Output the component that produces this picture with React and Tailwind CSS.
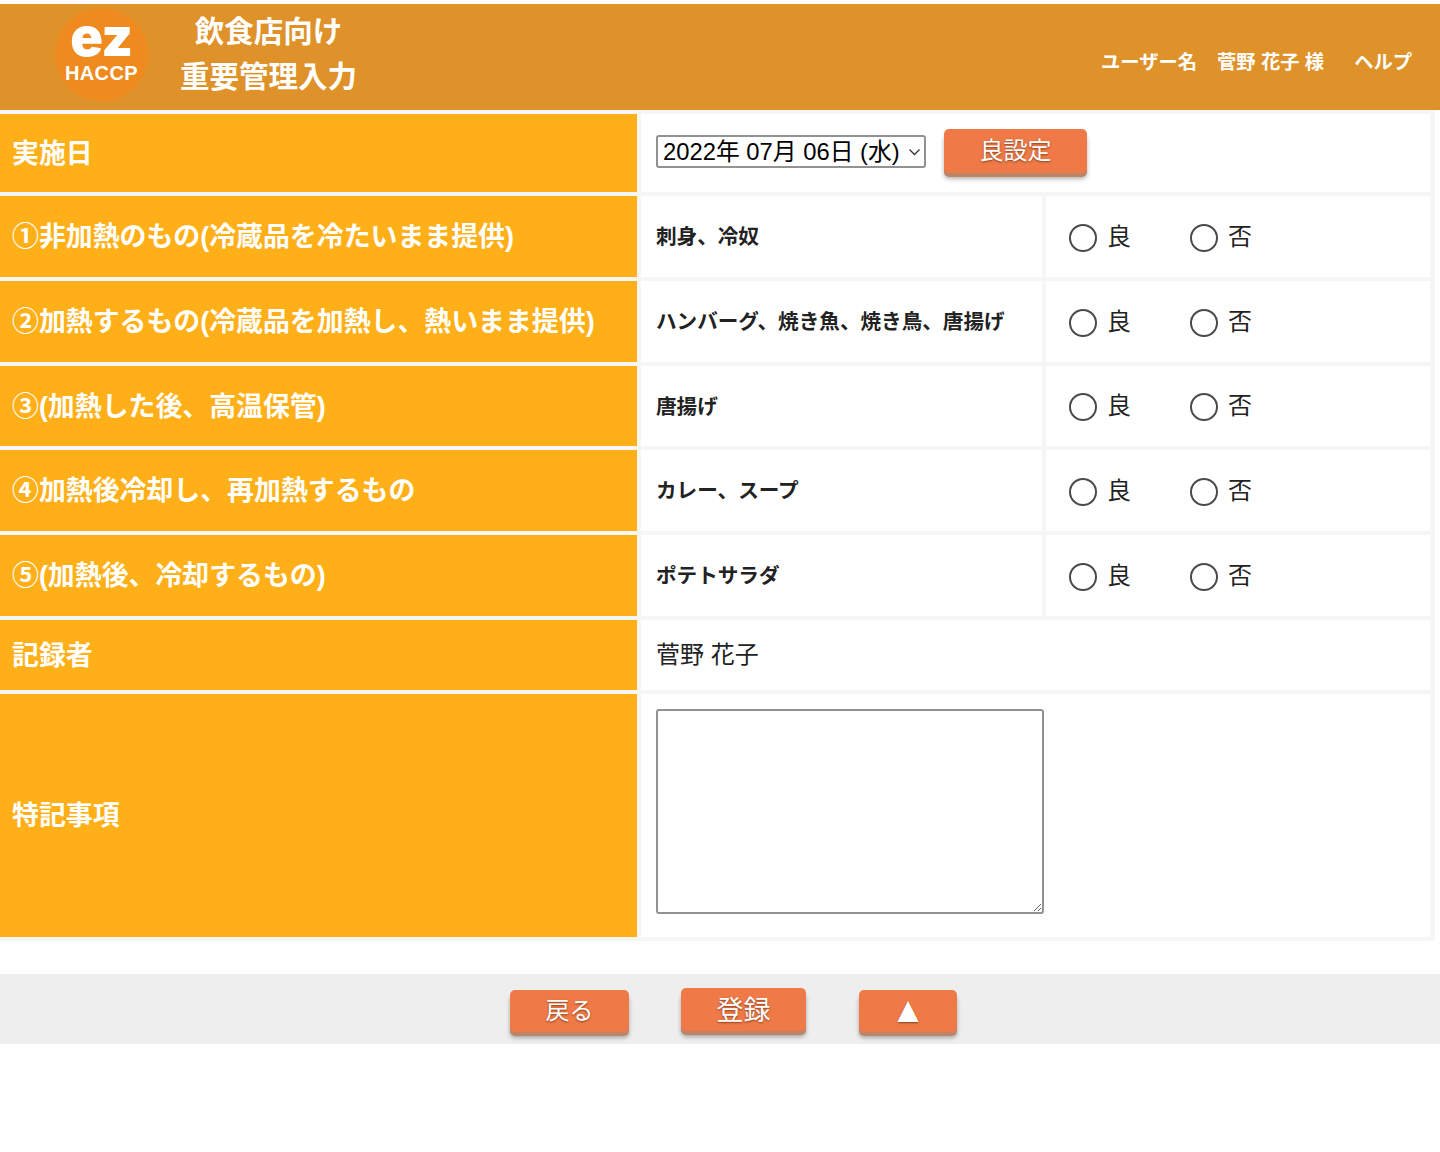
import React from 'react';

const jp = '[font-family:"Liberation_Sans","Noto_Sans_CJK_JP",sans-serif]';

const items = [
  { label: '①非加熱のもの(冷蔵品を冷たいまま提供)', food: '刺身、冷奴', h: 'h-[81px]' },
  { label: '②加熱するもの(冷蔵品を加熱し、熱いまま提供)', food: 'ハンバーグ、焼き魚、焼き鳥、唐揚げ', h: 'h-[81px]' },
  { label: '③(加熱した後、高温保管)', food: '唐揚げ', h: 'h-[80px]' },
  { label: '④加熱後冷却し、再加熱するもの', food: 'カレー、スープ', h: 'h-[81px]' },
  { label: '⑤(加熱後、冷却するもの)', food: 'ポテトサラダ', h: 'h-[81px]' },
];

function Head({ children }) {
  return (
    <div className="w-[637px] shrink-0 bg-[#ffaf17] flex items-center pl-[12px] pt-[2px] text-[26.9px] font-bold text-white whitespace-nowrap">
      {children}
    </div>
  );
}

function Radio({ name, label }) {
  return (
    <label className="flex items-center w-[121px] text-[24px] text-[#222]">
      <input type="radio" name={name} className="appearance-none w-[28px] h-[28px] rounded-full border-2 border-[#4a4a4a] bg-white mr-[10px]" />
      <span className="relative -top-[1px]">{label}</span>
    </label>
  );
}

function OrangeButton({ children, className }) {
  return (
    <button className={`bg-[#ef7a48] rounded-[5px] text-white [text-shadow:0_1px_2px_rgba(90,40,10,0.7)] shadow-[0_4px_0_#bd8468,0_6px_4px_rgba(0,0,0,0.3)] flex items-center justify-center ${className}`}>
      {children}
    </button>
  );
}

export default function App() {
  return (
    <div className={`min-h-[1152px] bg-white pt-1 ${jp}`}>
      {/* header */}
      <header className="h-[106px] bg-[#de9229] flex items-center text-white">
        <div className="ml-[55px] mb-[6px] w-[93px] h-[93px] rounded-full bg-[#ee8a1e] flex flex-col items-center pt-[7px]">
          <span className="text-[54px] leading-[44px] font-black tracking-[-0.5px] [font-family:Inter,sans-serif]">ez</span>
          <span className="text-[20px] leading-[20px] font-bold mt-[4px] tracking-[0.4px]">HACCP</span>
        </div>
        <div className="w-[177px] ml-[32px] mb-[6px] text-center text-[29.5px] leading-[45px] font-bold whitespace-nowrap">
          <div>飲食店向け</div>
          <div>重要管理入力</div>
        </div>
        <div className="ml-auto mr-[28px] flex items-center text-[19.3px] font-bold mt-[12px] whitespace-nowrap">
          <span>ユーザー名</span>
          <span className="ml-[20px]">菅野 花子 様</span>
          <span className="ml-[30px]">ヘルプ</span>
        </div>
      </header>

      {/* form table */}
      <div className="w-[1435px] bg-[#f6f6f6] flex flex-col gap-1 py-1 pr-[5px]">
        <div className="flex gap-1 h-[78px]">
          <Head>実施日</Head>
          <div className="flex-1 bg-white flex items-center pl-[15px] pb-[4px]">
            <div className="relative w-[270px] h-[33px] border-2 border-[#929292] rounded-[3px] bg-white text-[23.8px] text-black flex items-center pl-[5px] pt-[2px] whitespace-nowrap">
              2022年 07月 06日 (水)
              <svg className="absolute right-[3px] top-[11px]" width="13" height="9" viewBox="0 0 13 9" fill="none" stroke="#333" strokeWidth="1.3">
                <path d="M1.5 1.5 6.5 6.5 11.5 1.5" />
              </svg>
            </div>
            <OrangeButton className="ml-[18px] w-[143px] h-[44px] text-[24px]">良設定</OrangeButton>
          </div>
        </div>

        {items.map((item, i) => (
          <div key={i} className={`flex gap-1 ${item.h}`}>
            <Head>{item.label}</Head>
            <div className="w-[401px] shrink-0 bg-white flex items-center pl-[15px] pt-[2px] text-[20.6px] font-bold text-[#222] whitespace-nowrap">
              {item.food}
            </div>
            <div className="flex-1 bg-white flex items-center pl-[23px] pt-[2px]">
              <Radio name={`r${i}`} label="良" />
              <Radio name={`r${i}`} label="否" />
            </div>
          </div>
        ))}

        <div className="flex gap-1 h-[70px]">
          <Head>記録者</Head>
          <div className="flex-1 bg-white flex items-center pl-[15px] text-[24px] text-[#222]">菅野 花子</div>
        </div>

        <div className="flex gap-1 h-[243px]">
          <Head>特記事項</Head>
          <div className="flex-1 bg-white pl-[15px] pt-[15px]">
            <textarea className="block w-[388px] h-[205px] border-2 border-[#929292] rounded-[3px] bg-white" />
          </div>
        </div>
      </div>

      {/* footer buttons */}
      <div className="mt-[33px] h-[70px] bg-[#eeeeee] flex items-start pl-[510px]">
        <OrangeButton className="mt-[16px] w-[119px] h-[42px] text-[24px]">戻る</OrangeButton>
        <OrangeButton className="mt-[14px] ml-[52px] w-[125px] h-[43px] text-[27px] pt-[3px]">登録</OrangeButton>
        <OrangeButton className="mt-[16px] ml-[53px] w-[98px] h-[42px] text-[36px] leading-none pb-[3px]">▲</OrangeButton>
      </div>
    </div>
  );
}
